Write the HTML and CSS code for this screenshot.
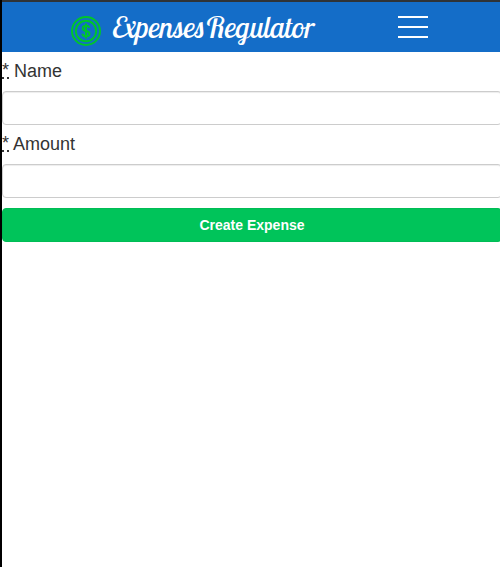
FILE: index.html
```html
<!DOCTYPE html>
<html lang="en">
<head>
<meta charset="utf-8">
<title>ExpensesRegulator</title>
<link rel="stylesheet" href="styles.css">
</head>
<body>
<header class="navbar">
  <a class="brand">
    <svg class="coin" viewBox="0 0 30 30" aria-hidden="true">
      <circle cx="15" cy="15" r="14"/>
      <circle cx="15" cy="15" r="10.2"/>
      <path d="M15 7.6v14.8M18.4 11.9c-.3-1.4-1.5-2.2-3.4-2.2-2 0-3.3 1-3.3 2.5 0 1.7 1.3 2.3 3.3 2.7 2.200.4 3.500 1.100 3.500 2.800 0 1.600-1.400 2.600-3.500 2.600-2.100 0-3.400-.9-3.700-2.500"/>
    </svg>
    <span class="wordmark">ExpensesRegulator</span>
  </a>
  <div class="menu"><span></span><span></span><span></span></div>
</header>
<form class="form">
  <label for="name"><abbr>*</abbr> Name</label>
  <input id="name" type="text">
  <label for="amount"><abbr>*</abbr> Amount</label>
  <input id="amount" type="text">
  <button type="button">Create Expense</button>
</form>
</body>
</html>
```
FILE: styles.css
```css
* { box-sizing: border-box; }
html { overflow: hidden; background: #fff; }
body {
  margin: 0;
  height: 567px;
  border-left: 2px solid #000;
  font: 14px/20px "Liberation Sans", Arial, sans-serif;
  color: #333;
  overflow: hidden;
}
.navbar {
  height: 52px;
  border-top: 2px solid #2f3337;
  background: #146dc8;
  display: flex;
  justify-content: space-between;
  padding: 0 72px 0 69px;
}
.brand { display: flex; }
.coin {
  width: 30px;
  height: 30px;
  margin: 14px 10px 0 0;
  fill: none;
  stroke: #00c52c;
  stroke-width: 2;
}
.wordmark {
  margin: 5px 0 0 1.5px;
  color: #fff;
  font: italic 30px/40px "Lobster Two", "Liberation Serif", serif;
}
.menu {
  width: 30px;
  margin-top: 14px;
  display: flex;
  flex-direction: column;
  gap: 8px;
}
.menu span { height: 2px; background: #fff; }
.form {
  width: 500px;
  display: flex;
  flex-direction: column;
  padding-top: 6px;
}
label {
  height: 28px;
  margin-bottom: 5px;
  font-size: 18px;
  line-height: 26px;
}
abbr { border-bottom: 2px dotted #333; display: inline-block; line-height: 18px; height: 18px; vertical-align: 1px; }
input {
  height: 34px;
  margin: 0 0 6px;
  border: 1px solid #ccc;
  border-radius: 4px;
  background: #fff;
  box-shadow: inset 0 1px 1px rgba(0, 0, 0, 0.075);
}
button {
  height: 34px;
  margin-top: 4px;
  padding: 0;
  border: 1px solid #00bd55;
  border-radius: 4px;
  background: #00c45a;
  color: #fff;
  font: bold 14px/20px "Liberation Sans", Arial, sans-serif;
}
```
